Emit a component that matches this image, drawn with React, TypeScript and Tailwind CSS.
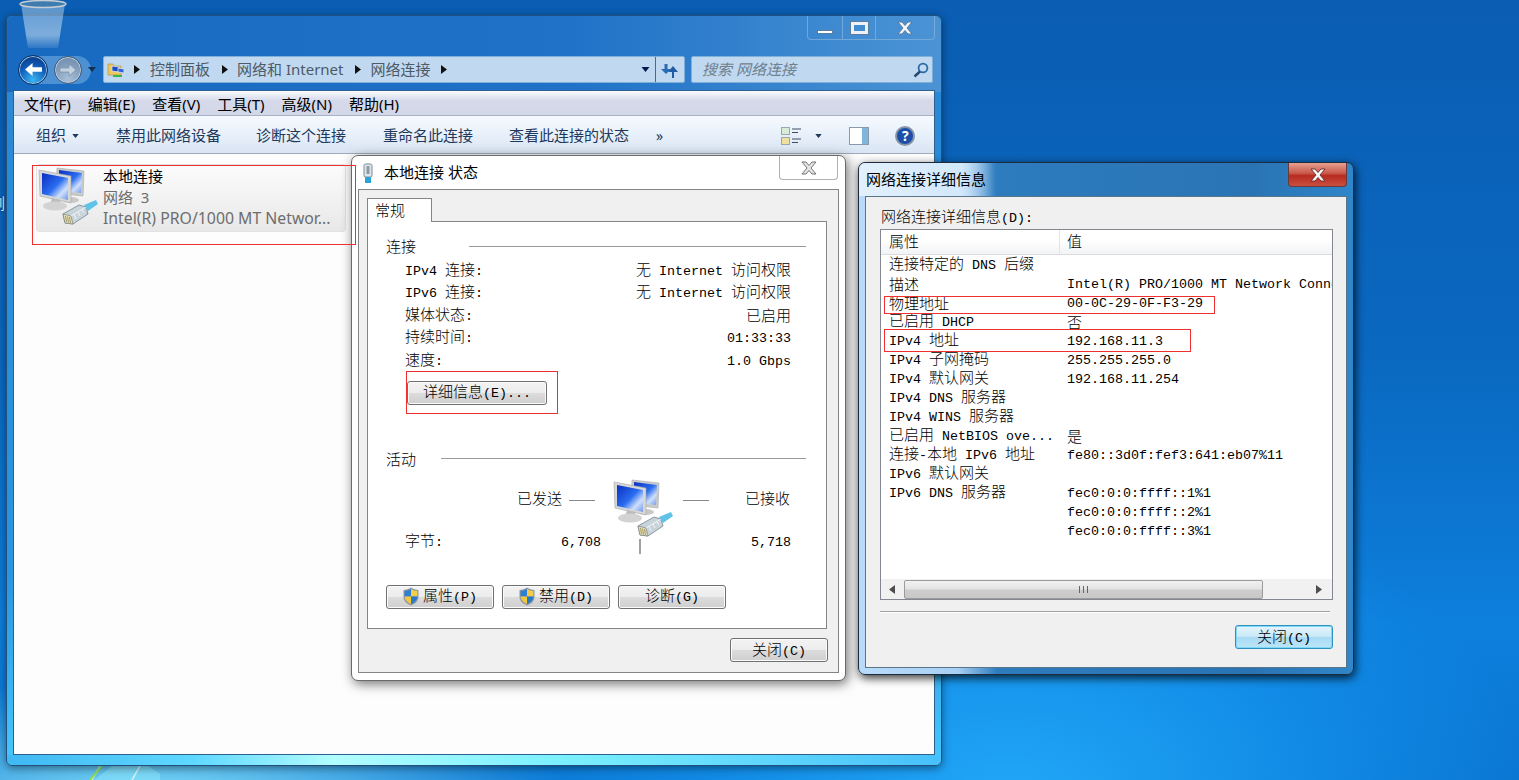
const uiFont = "font-['Noto_Sans','Noto_Sans_CJK_SC',sans-serif]";

// classic dialog text: wide CJK glyphs next to half-width latin
function T({ text }: { text: string }) {
  const parts = text.match(/[\u3000-\u9fff]+|[^\u3000-\u9fff]+/g) ?? [];
  return (
    <span className="whitespace-pre leading-[18px]">
      {parts.map((part, i) =>
        /[\u3000-\u9fff]/.test(part) ? (
          <span key={i} className="inline-block font-['Noto_Sans_CJK_SC',sans-serif] text-[15px] font-light">
            {part}
          </span>
        ) : (
          <span key={i} className="inline-block font-['Liberation_Mono',monospace] text-[13.33px]">
            {part}
          </span>
        )
      )}
    </span>
  );
}

function NetworkIcon({ className }: { className: string }) {
  return (
    <svg viewBox="0 0 60 58" className={className}>
      <defs>
        <linearGradient id="screen" x1="0" y1="0" x2="1" y2="1">
          <stop offset="0" stopColor="#0a2fc0" />
          <stop offset="0.5" stopColor="#2a6cf0" />
          <stop offset="0.75" stopColor="#cfe0fb" />
          <stop offset="1" stopColor="#6f96e8" />
        </linearGradient>
      </defs>
      <path d="M19 1 L46 4 L45 29 L18 26Z" fill="#c9cbcb" stroke="#a8a8a8" strokeWidth="0.6" />
      <path d="M21 3 L44 6 L43 26 L21 23Z" fill="url(#screen)" />
      <ellipse cx="33" cy="33" rx="8" ry="3" fill="#c8c8c8" />
      <path d="M1 3 L33 9 L33 36 L2 29Z" fill="#d6d8d8" stroke="#a5a5a5" strokeWidth="0.6" />
      <path d="M4 6 L30 11 L30 33 L4 27Z" fill="url(#screen)" />
      <path d="M14 31 L22 33 L23 37 L13 35Z" fill="#bcbcbc" />
      <ellipse cx="17" cy="39" rx="12" ry="4.5" fill="#d3d3d3" />
      {/* RJ45 plug */}
      <path d="M25 47 L41 38 L48 40 L50 47 L35 57 L27 56Z" fill="#c8d4da" stroke="#66797f" strokeWidth="0.7" strokeLinejoin="round" />
      <path d="M25 47 L33 49 L35 57 L27 56Z" fill="#e7dfb5" stroke="#66797f" strokeWidth="0.6" />
      <path d="M27.5 49 L28.5 55 M29.5 49.5 L30.5 55.5 M31.5 50 L32.5 56" stroke="#8a7f45" strokeWidth="0.7" />
      <path d="M33 49 L48 40 M36 47 L38 52 M40 45 L42 49 M44 42.5 L46 46" stroke="#f4f8fa" strokeWidth="0.9" />
      <path d="M46 38 L58 33 L60 37 L50 44Z" fill="#5fc3e8" />
    </svg>
  );
}

function Shield() {
  return (
    <svg viewBox="0 0 16 19" className="w-[16px] h-[19px] shrink-0">
      <path d="M8 0.5 C10 2 13 3 15.5 3 V10 C15.5 14 12 17 8 18.5 C4 17 0.5 14 0.5 10 V3 C3 3 6 2 8 0.5Z" fill="#8a97a5" />
      <path d="M8 2 V9.5 H1.6 V4 C4 4 6 3.2 8 2Z" fill="#2f7fd0" />
      <path d="M8 2 C10 3.2 12 4 14.4 4 V9.5 H8Z" fill="#f5cc45" />
      <path d="M8 9.5 H1.6 C1.8 13 4.5 15.6 8 17Z" fill="#f2c63d" />
      <path d="M8 9.5 H14.4 C14.2 13 11.5 15.6 8 17Z" fill="#2a78c8" />
    </svg>
  );
}

function CloseGlyph({ className, fill, stroke }: { className: string; fill: string; stroke: string }) {
  return (
    <svg viewBox="0 0 16 14" className={className}>
      <path d="M1 1 H5 L8 4.5 L11 1 H15 L10 7 L15 13 H11 L8 9.5 L5 13 H1 L6 7Z" fill={fill} stroke={stroke} strokeWidth="1" />
    </svg>
  );
}

function Triangle({ className }: { className: string }) {
  return (
    <svg viewBox="0 0 6 9" className={className}>
      <path d="M0 0 L6 4.5 L0 9Z" fill="#111" />
    </svg>
  );
}

function Caret({ className, color }: { className: string; color: string }) {
  return (
    <svg viewBox="0 0 8 5" className={className}>
      <path d="M0 0 H8 L4 5Z" fill={color} />
    </svg>
  );
}

const winBtn =
  "flex items-center justify-center rounded-[3px] border border-[#707070] text-black bg-[linear-gradient(#f3f3f3,#ececec_48%,#dcdcdc_50%,#cfcfcf)] shadow-[inset_0_0_0_1px_#fbfbfb]";

function Desktop() {
  return (
    <>
      <svg viewBox="0 0 120 14" className="absolute left-[40px] bottom-0 w-[120px] h-[14px]">
        <path d="M72 0 L54 14 H130 L108 0Z" fill="#7fdcf8" opacity="0.8" />
        <path d="M60 0 L52 14 M100 0 L92 14" stroke="#eaffff" strokeWidth="1.5" opacity="0.8" />
        <path d="M62 0 L50 14" stroke="#8edc50" strokeWidth="2" />
      </svg>
      <span className="absolute left-[-10px] top-[193px] leading-[20px] text-[15px] text-white [text-shadow:0_0_2px_#000] font-['Noto_Sans_CJK_SC',sans-serif]">
        浏
      </span>
    </>
  );
}

function RecycleBin() {
  return (
    <svg viewBox="0 0 48 56" className="absolute left-[19px] top-0 w-[48px] h-[56px] pointer-events-none">
      <defs>
        <linearGradient id="bin" x1="0" y1="0" x2="0" y2="1">
          <stop offset="0" stopColor="#bcd8ee" stopOpacity="0.45" />
          <stop offset="0.7" stopColor="#cfe3f2" stopOpacity="0.55" />
          <stop offset="1" stopColor="#dfeaf4" stopOpacity="0.1" />
        </linearGradient>
      </defs>
      <path d="M2 4 L9 48 H39 L46 4Z" fill="url(#bin)" />
      <ellipse cx="24" cy="4" rx="23" ry="3.5" fill="#3f7db0" stroke="#c4ccd4" strokeWidth="1.4" />
    </svg>
  );
}

function NavBar() {
  return (
    <div className="flex items-center h-[27px] mt-[40px] ml-[6px]">
      <div className="relative flex items-center w-[90px] h-[32px] pl-[5px] shrink-0">
        <div className="absolute left-[10px] top-[2px] w-[68px] h-[28px] rounded-full bg-[#8fc0ea]/45" />
        <div className="relative flex items-center justify-center w-[30px] h-[30px] rounded-full border border-[#0c2f5c] bg-[radial-gradient(circle_at_50%_85%,#39b6f4,#0f57b4_55%,#0b2f70)] shadow-[inset_0_0_0_1px_#9fc8ee]">
          <svg viewBox="0 0 20 16" className="w-[19px] h-[15px]">
            <path d="M9 1 L1 8 L9 15 V10.5 H19 V5.5 H9Z" fill="#fff" />
          </svg>
        </div>
        <div className="relative flex items-center justify-center w-[28px] h-[28px] ml-[6px] rounded-full border border-[#3e5a78] bg-[radial-gradient(circle_at_50%_85%,#a9c0d8,#7f9ab8_60%,#6c86a6)] shadow-[inset_0_0_0_1px_#c0d0e0]">
          <svg viewBox="0 0 18 14" className="w-[18px] h-[14px]">
            <path d="M10 1 L17 7 L10 13 V9 H1 V5 H10Z" fill="#c3d0de" stroke="#6d87a4" strokeWidth="0.6" />
          </svg>
        </div>
        <Caret className="relative w-[10px] h-[5px] ml-[5px]" color="#12314f" />
      </div>
      <div className={`${uiFont} flex items-center w-[582px] h-[27px] rounded-[2px] border border-[#7fb0da] bg-[#c0d9f0] text-[15px] text-[#4d5a66]`}>
        <svg viewBox="0 0 18 18" className="w-[18px] h-[18px] ml-[3px] shrink-0">
          <path d="M1 3 H6 L7 5 H14 V14 H1Z" fill="#e8c860" stroke="#a98c3c" strokeWidth="0.6" />
          <path d="M5 5 L12 6 V11 L5 10Z" fill="#1a49c0" stroke="#dfe5ea" strokeWidth="0.8" />
          <path d="M11 7 L17 8 V12 L11 11Z" fill="#2d62d8" stroke="#dfe5ea" strokeWidth="0.8" />
          <path d="M6 15 H15" stroke="#3bb54a" strokeWidth="2" />
        </svg>
        <Triangle className="w-[6px] h-[9px] ml-[9px] shrink-0" />
        <span className="ml-[10px]">控制面板</span>
        <Triangle className="w-[6px] h-[9px] ml-[12px] shrink-0" />
        <span className="ml-[9px]">网络和 Internet</span>
        <Triangle className="w-[6px] h-[9px] ml-[11px] shrink-0" />
        <span className="ml-[10px]">网络连接</span>
        <Triangle className="w-[6px] h-[9px] ml-[10px] shrink-0" />
        <Caret className="w-[9px] h-[5px] ml-auto mr-[5px]" color="#0a1a50" />
        <div className="flex items-center justify-center w-[29px] h-full border-l border-[#4b6a88]">
          <svg viewBox="0 0 18 16" className="w-[18px] h-[16px]">
            <path d="M5 12 L0 7 H3.5 V2 H6.5 V7 H10Z" fill="#2a6cb4" />
            <path d="M12 4 L7 10 H11 V16 H13 V10 H17Z" fill="#1f5ea6" />
          </svg>
        </div>
      </div>
      <div className={`${uiFont} flex items-center justify-between w-[242px] h-[27px] ml-[6px] pl-[10px] pr-[3px] rounded-[2px] border border-[#7fb0da] bg-[#c0d9f0]`}>
        <span className="text-[15px] italic text-[#6f808f]">搜索 网络连接</span>
        <svg viewBox="0 0 16 16" className="w-[16px] h-[16px]">
          <circle cx="10" cy="6" r="4.4" fill="none" stroke="#2a6ba8" strokeWidth="1.8" />
          <path d="M7 9.5 L1.5 14.5" stroke="#27476b" strokeWidth="2.4" />
        </svg>
      </div>
    </div>
  );
}

function MainWindow() {
  const menus = ["文件(F)", "编辑(E)", "查看(V)", "工具(T)", "高级(N)", "帮助(H)"];
  return (
    <div className="absolute left-[6px] top-[15px] w-[936px] h-[751px] rounded-[6px] border border-[#21507e] shadow-[0_2px_8px_rgba(0,0,0,0.45)] bg-[linear-gradient(180deg,#2a86d4,#2a96e0_75%,#44c4fb_98%)] flex flex-col">
      <div className="absolute top-0 left-0 w-full h-[76px] rounded-t-[6px] bg-[linear-gradient(90deg,#186ac0,#1f72c8_60%,#4b93d4)]" />
      <div className="absolute bottom-0 left-0 w-full h-[10px] rounded-b-[6px] bg-[linear-gradient(90deg,#3fb8f4,#5fd8ff_20%,#b2fdff_35%,#7af0ff_60%,#47c0fb)]" />
      <div className="absolute right-[6px] top-0 flex h-[24px] w-[128px] rounded-b-[4px] border border-t-0 border-[#7fb0da]/80 text-white">
        <div className="flex items-end justify-center pb-[5px] w-[35px] border-r border-[#7fb0da]/80">
          <div className="w-[16px] h-[4px] bg-white border border-[#5a7d9f]" />
        </div>
        <div className="flex items-center justify-center w-[33px] border-r border-[#7fb0da]/80">
          <div className="w-[17px] h-[12px] border-[3px] border-[#eef2f6] outline outline-[#5a7d9f]" />
        </div>
        <div className="flex flex-1 items-center justify-center">
          <CloseGlyph className="w-[16px] h-[14px]" fill="#f4f6f8" stroke="#5a7d9f" />
        </div>
      </div>
      <div className="relative flex flex-col h-full">
        <NavBar />
        <div className={`${uiFont} flex flex-col flex-1 mt-[7px] mx-[6px] mb-[10px] border border-[#2f5f8c] bg-[#fdfdfd] text-[15px] text-black`}>
          <div className="flex items-center gap-[17px] h-[25px] pl-[10px] pt-[2px] border-b border-[#a9b3c6] bg-[linear-gradient(#fbfcfe,#d5d9ea_40%,#d3d8e9)]">
            {menus.map((m) => (
              <span key={m}>{m}</span>
            ))}
          </div>
          <div className="flex items-center h-[38px] pl-[22px] pt-[2px] border-b border-[#a0aab8] bg-[linear-gradient(#f6faff,#e8f0fa_50%,#d9e5f3)] text-[#1e395b]">
            <span>组织</span>
            <Caret className="w-[7px] h-[4px] ml-[6px]" color="#1e395b" />
            <span className="ml-[37px]">禁用此网络设备</span>
            <span className="ml-[35px]">诊断这个连接</span>
            <span className="ml-[37px]">重命名此连接</span>
            <span className="ml-[36px]">查看此连接的状态</span>
            <span className="ml-[27px] text-[14px]">»</span>
            <svg viewBox="0 0 22 20" className="w-[22px] h-[20px] ml-[118px]">
              <rect x="0.5" y="1.5" width="8" height="7" fill="#d8ecd8" stroke="#9aa6b2" />
              <rect x="0.5" y="11.5" width="8" height="7" fill="#f0e0a0" stroke="#9aa6b2" />
              <path d="M11 3 H20 M11 6.5 H17 M11 13 H20 M11 16.5 H17" stroke="#3a4e63" strokeWidth="1" />
            </svg>
            <Caret className="w-[7px] h-[4px] ml-[12px]" color="#1e395b" />
            <div className="flex w-[20px] h-[18px] ml-[27px] border border-[#8a9aac]">
              <div className="flex-1 bg-white" />
              <div className="w-[6px] bg-[#7fb6dc]" />
            </div>
            <div className="flex items-center justify-center w-[20px] h-[20px] ml-[26px] rounded-full border-2 border-[#8795a8] bg-[#1c4fa8] text-[14px] leading-none font-bold text-white">
              ?
            </div>
          </div>
          <div className="flex items-start flex-1 pt-[10px] pl-[22px]">
            <div className="relative w-[310px] h-[68px] rounded-[3px] border border-[#e2e2e2] bg-[linear-gradient(#fcfcfc,#e8e8e8)] leading-[21px]">
              <NetworkIcon className="absolute left-[1px] top-[2px] w-[60px] h-[58px]" />
              <div className="pl-[66px] pt-[1px] whitespace-nowrap">
                <div>本地连接</div>
                <div className="text-[#6d6d6d]">网络&nbsp; 3</div>
                <div className="text-[15.8px] text-[#6d6d6d]">Intel(R) PRO/1000 MT Networ...</div>
              </div>
            </div>
          </div>
        </div>
      </div>
    </div>
  );
}

function StatusDialog() {
  const rows = [
    ["IPv4 连接:", "无 Internet 访问权限"],
    ["IPv6 连接:", "无 Internet 访问权限"],
    ["媒体状态:", "已启用"],
    ["持续时间:", "01:33:33"],
    ["速度:", "1.0 Gbps"],
  ];
  return (
    <div className="absolute left-[351px] top-[155px] w-[495px] h-[526px] rounded-[7px] border border-[#6a6a6a] bg-white shadow-[2px_3px_12px_rgba(0,0,0,0.55)] flex flex-col">
      <div className="relative flex items-center h-[33px] shrink-0 pl-[10px]">
        <svg viewBox="0 0 12 20" className="w-[12px] h-[20px]">
          <rect x="2" y="1" width="8" height="13" rx="1.5" fill="#dfe6ea" stroke="#7c8a94" />
          <rect x="4.5" y="3" width="3" height="8" fill="#8a9aa6" />
          <path d="M3 14 H9 V20 H3Z" fill="#2aa5dc" />
        </svg>
        <span className={`${uiFont} ml-[10px] text-[15px] text-black`}>本地连接 状态</span>
        <div className="absolute right-[7px] top-0 flex items-center justify-center w-[59px] h-[24px] rounded-b-[4px] border border-t-0 border-[#b0b0b0] bg-white">
          <CloseGlyph className="w-[16px] h-[14px]" fill="#e6e6e6" stroke="#737373" />
        </div>
      </div>
      <div className="flex flex-col h-[484px] mx-[6px] px-[8px] pt-[8px] border border-[#858585] bg-[#f0f0f0] text-black">
        <div className="relative z-10 flex items-center w-[65px] h-[24px] -mb-px pl-[7px] pb-[1px] border border-b-0 border-[#858585] bg-white">
          <T text="常规" />
        </div>
        <div className="flex flex-col h-[408px] w-[460px] pl-[18px] pt-[14px] border border-[#858585] bg-white">
          <div className="flex items-center h-[20px] pr-[20px]">
            <T text="连接" />
            <div className="flex-1 h-px ml-[53px] bg-[#9a9a9a]" />
          </div>
          <div className="flex flex-col mt-[3px] ml-[19px] w-[386px]">
            {rows.map(([label, value]) => (
              <div key={label} className="flex items-center justify-between h-[22.5px]">
                <T text={label} />
                <T text={value} />
              </div>
            ))}
          </div>
          <button className={`${winBtn} w-[140px] h-[24px] mt-[9px] ml-[21px]`}>
            <T text="详细信息(E)..." />
          </button>
          <div className="flex items-center h-[20px] mt-[44px] pr-[20px]">
            <T text="活动" />
            <div className="flex-1 h-px ml-[25px] bg-[#9a9a9a]" />
          </div>
          <div className="flex items-start h-[53px] mt-[10px] ml-[131px]">
            <div className="flex items-center h-[20px] mt-[9px] w-[45px]"><T text="已发送" /></div>
            <div className="w-[26px] h-px mt-[21px] ml-[7px] bg-[#8a8a8a]" />
            <NetworkIcon className="w-[60px] h-[58px] ml-[18px] shrink-0" />
            <div className="w-[26px] h-px mt-[21px] ml-[10px] bg-[#8a8a8a]" />
            <div className="flex items-center h-[20px] mt-[9px] ml-[36px]"><T text="已接收" /></div>
          </div>
          <div className="flex items-center h-[20px] ml-[19px]">
            <div className="flex items-center justify-between w-[196px]">
              <T text="字节:" />
              <T text="6,708" />
            </div>
            <div className="self-start w-[2px] h-[15px] mt-[7px] ml-[38px] bg-[#a0a0a0]" />
            <div className="flex justify-end w-[150px]"><T text="5,718" /></div>
          </div>
          <div className="flex gap-[8px] mt-[33px]">
            <button className={`${winBtn} w-[108px] h-[24px] gap-[4px]`}>
              <Shield />
              <T text="属性(P)" />
            </button>
            <button className={`${winBtn} w-[108px] h-[24px] gap-[4px]`}>
              <Shield />
              <T text="禁用(D)" />
            </button>
            <button className={`${winBtn} w-[108px] h-[24px]`}>
              <T text="诊断(G)" />
            </button>
          </div>
        </div>
        <button className={`${winBtn} self-end w-[98px] h-[24px] mt-[9px] mr-[2px]`}>
          <T text="关闭(C)" />
        </button>
      </div>
    </div>
  );
}

function DetailsDialog() {
  const rows = [
    ["连接特定的 DNS 后缀", ""],
    ["描述", "Intel(R) PRO/1000 MT Network Connection"],
    ["物理地址", "00-0C-29-0F-F3-29"],
    ["已启用 DHCP", "否"],
    ["IPv4 地址", "192.168.11.3"],
    ["IPv4 子网掩码", "255.255.255.0"],
    ["IPv4 默认网关", "192.168.11.254"],
    ["IPv4 DNS 服务器", ""],
    ["IPv4 WINS 服务器", ""],
    ["已启用 NetBIOS ove...", "是"],
    ["连接-本地 IPv6 地址", "fe80::3d0f:fef3:641:eb07%11"],
    ["IPv6 默认网关", ""],
    ["IPv6 DNS 服务器", "fec0:0:0:ffff::1%1"],
    ["", "fec0:0:0:ffff::2%1"],
    ["", "fec0:0:0:ffff::3%1"],
  ];
  return (
    <div className="absolute left-[858px] top-[162px] w-[496px] h-[513px] rounded-[7px] border border-[#1c2c3c] bg-[linear-gradient(90deg,#b9dbfb,#a8d0f4_20%,#2d7cbe_28%,#2a74b4_80%,#2f86ca)] shadow-[1px_3px_10px_rgba(0,0,0,0.8)] flex flex-col">
      <div className="absolute left-0 top-0 w-[135px] h-[33px] rounded-tl-[7px] bg-[linear-gradient(90deg,#e3f0fc,#d3e8fb_75%,rgba(200,225,250,0))]" />
      <div className="absolute right-[6px] top-0 flex items-center justify-center w-[59px] h-[24px] rounded-b-[4px] border border-t-0 border-[#6a3a3a] bg-[linear-gradient(#e8a090,#c8584a_45%,#b82a20_55%,#c85040)]">
        <CloseGlyph className="w-[16px] h-[14px]" fill="#f8f8f8" stroke="#7a3030" />
      </div>
      <div className="relative flex items-center h-[33px] shrink-0 pl-[7px]">
        <span className={`${uiFont} text-[15px] text-black`}>网络连接详细信息</span>
      </div>
      <div className="relative flex flex-col h-[472px] mx-[6px] pt-[10px] pl-[14px] border border-[#5a7488] bg-[#f0f0f0] text-black">
        <div className="flex items-center h-[20px] ml-px"><T text="网络连接详细信息(D):" /></div>
        <div className="flex flex-col w-[453px] h-[371px] mt-[2px] border border-[#828790] bg-white">
          <div className="flex items-center h-[25px] shrink-0 border-b border-[#dcdcdc] bg-[linear-gradient(#ffffff,#ffffff_40%,#f2f3f4)]">
            <div className="flex items-center w-[179px] h-full pl-[8px] pb-[2px] border-r border-[#e4e4e4]"><T text="属性" /></div>
            <div className="flex items-center h-full pl-[7px] pb-[2px]"><T text="值" /></div>
          </div>
          <div className="flex-1 overflow-hidden">
            {rows.map(([name, value], i) => (
              <div key={i} className="flex items-center h-[19px] pl-[8px] whitespace-nowrap">
                <div className="flex items-center w-[178px] h-[19px] shrink-0"><T text={name} /></div>
                <T text={value} />
              </div>
            ))}
          </div>
          <div className="flex items-center h-[20px] shrink-0 bg-[#f1f1f1]">
            <svg viewBox="0 0 6 9" className="w-[6px] h-[9px] ml-[8px] rotate-180">
              <path d="M0 0 L6 4.5 L0 9Z" fill="#4d4d4d" />
            </svg>
            <div className="flex items-center justify-center w-[359px] h-[19px] ml-[9px] rounded-[2px] border border-[#9b9b9b] bg-[linear-gradient(#f1f1f1,#e4e4e4_45%,#cdcdcd_55%,#c8c8c8)]">
              <div className="w-[9px] h-[7px] border-x border-[#666] bg-[linear-gradient(90deg,transparent_40%,#666_40%,#666_60%,transparent_60%)]" />
            </div>
            <svg viewBox="0 0 6 9" className="w-[6px] h-[9px] ml-[53px]">
              <path d="M0 0 L6 4.5 L0 9Z" fill="#4d4d4d" />
            </svg>
          </div>
        </div>
        <div className="w-[450px] h-[2px] mt-[11px] bg-[#a0a0a0] border-b border-white" />
        <button className="self-end flex items-center justify-center w-[98px] h-[24px] mt-[12px] mr-[13px] rounded-[3px] border border-[#2c92c0] bg-[linear-gradient(#e6f5fc,#c8e8f8_48%,#a8daf4_52%,#bde6f8)] shadow-[inset_0_0_0_1px_#7fd8f8]">
          <T text="关闭(C)" />
        </button>
      </div>
    </div>
  );
}

export default function App() {
  return (
    <div className="relative w-[1519px] h-[780px] overflow-hidden bg-[radial-gradient(ellipse_520px_330px_at_1010px_800px,#22a8f8,rgba(20,150,240,0.6)_60%,rgba(10,110,210,0)),radial-gradient(ellipse_420px_120px_at_150px_800px,#7fdcf8,rgba(60,170,240,0)),linear-gradient(180deg,#0a5db2,#0a68c0_45%,#0d7fdc_80%,#0a76d2)]">
      <Desktop />
      <MainWindow />
      <RecycleBin />
      <StatusDialog />
      <DetailsDialog />
      {/* red annotation boxes drawn over the screenshot */}
      <div className="absolute left-[32px] top-[165px] w-[324px] h-[80px] border border-[#f03030]" />
      <div className="absolute left-[406px] top-[371px] w-[152px] h-[43px] border border-[#f03030]" />
      <div className="absolute left-[884px] top-[296px] w-[331px] h-[18px] border border-[#f03030]" />
      <div className="absolute left-[884px] top-[329px] w-[307px] h-[23px] border border-[#f03030]" />
    </div>
  );
}
